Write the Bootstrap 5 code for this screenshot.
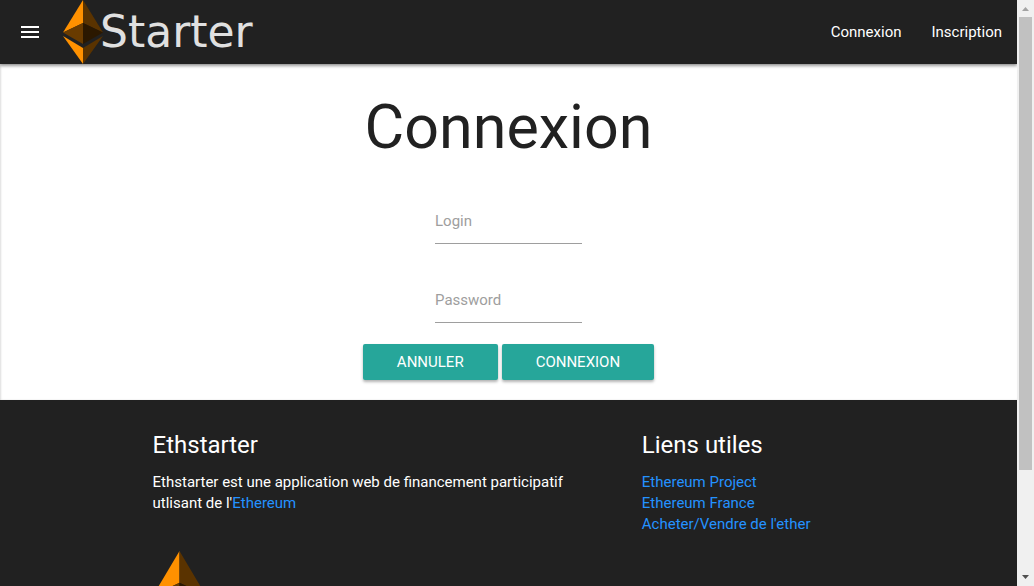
<!DOCTYPE html>
<html lang="fr">
<head>
<meta charset="utf-8">
<meta name="viewport" content="width=device-width, initial-scale=1">
<title>Ethstarter - Connexion</title>
<link href="https://cdn.jsdelivr.net/npm/bootstrap@5.3.0/dist/css/bootstrap.min.css" rel="stylesheet">
<style>
  body { font-family: Roboto, sans-serif; font-size: 15px; line-height: 21px; color: #212121; }
  a { text-decoration: none; color: #2492ff; }
  .page-view { overflow: hidden; }
  .top-bar { height: 64px; background: #212121; box-shadow: 0 2px 3px rgba(0,0,0,.4); padding-left: 20px; z-index: 1; }
  .menu-btn { background: none; width: 20px; }
  .brand { margin-left: 23px; color: #e0e0e0; font: 44px/64px "DejaVu Sans", sans-serif; }
  .brand svg { width: 40px; height: 64px; flex: none; margin-right: -3px; }
  .top-bar .nav-link { color: #fff; padding: 0 15px; line-height: 64px; }
  .form-area { box-shadow: inset 1px 0 2px #ddd; padding: 29px 0 20px; }
  h1 { font-size: 61px; line-height: 69px; font-weight: 400; margin: 0 0 24px; }
  .line-field { width: 147px; margin: 12px 0 21px; }
  .line-field .form-control { border: 0; border-bottom: 1px solid #9e9e9e; border-radius: 0; height: 46px; padding: 0; font-size: 15px; line-height: 21px; background: none; }
  .line-field .form-control::placeholder { color: #9e9e9e; opacity: 1; }
  .btn-teal { background: #26a69a; color: #fff; border: 0; border-radius: 2px; height: 36px; padding: 0 34px; font-size: 15px; line-height: 36px; text-transform: uppercase; box-shadow: 0 2px 3px rgba(0,0,0,.3); }
  .site-footer { background: #212121; color: #fff; padding-top: 30px; }
  .footer-inner { width: 70%; }
  .footer-inner .row { --bs-gutter-x: 22px; }
  h2 { font-size: 24px; line-height: 30px; font-weight: 400; margin: 0 0 12px; }
  .footer-logo { width: 53px; height: 88px; margin-top: 37px; }
  .scroll-track { width: 17px; background: #f0f0f0; flex: none; }
  .scroll-track svg { width: 17px; height: 17px; flex: none; }
  .scroll-thumb { width: 13px; height: 82%; background: #c1c1c1; }
</style>
</head>
<body>
<div class="d-flex vh-100 overflow-hidden">
  <div class="page-view flex-fill d-flex flex-column">
    <nav class="top-bar d-flex align-items-center flex-shrink-0 position-relative">
      <button type="button" class="menu-btn border-0 p-0 d-flex" aria-label="Menu">
        <svg width="20" height="14" viewBox="0 0 20 14"><path d="M1 2h18M1 7h18M1 12h18" stroke="#fff" stroke-width="2"/></svg>
      </button>
      <a href="#" class="brand d-flex align-items-start">
        <svg viewBox="0 0 40 64"><path fill="#ff9100" d="M20 0L0 32.500 20 23z"/><path fill="#5a3300" d="M20 0L40 32.500 20 23z"/><path fill="#693b00" d="M0 32.500L20 23V44z"/><path fill="#2b1800" d="M40 32.500L20 23V44z"/><path fill="#ff9100" d="M0 36L20 48V64z"/><path fill="#5a3300" d="M40 36L20 48V64z"/></svg>
        <span>Starter</span>
      </a>
      <div class="nav ms-auto">
        <a class="nav-link" href="#">Connexion</a>
        <a class="nav-link" href="#">Inscription</a>
      </div>
    </nav>
    <main class="form-area text-center flex-shrink-0">
      <h1>Connexion</h1>
      <form class="d-flex flex-column align-items-center">
        <div class="line-field"><input class="form-control" type="text" placeholder="Login" aria-label="Login"></div>
        <div class="line-field"><input class="form-control" type="password" placeholder="Password" aria-label="Password"></div>
        <div class="d-flex gap-1">
          <button type="button" class="btn btn-teal">Annuler</button>
          <button type="submit" class="btn btn-teal">Connexion</button>
        </div>
      </form>
    </main>
    <footer class="site-footer flex-shrink-0">
      <div class="footer-inner mx-auto">
        <div class="row">
          <div class="col-8 pe-5">
            <h2>Ethstarter</h2>
            <p class="m-0">Ethstarter est une application web de financement participatif utlisant de l'<a href="#">Ethereum</a></p>
            <svg class="footer-logo d-block" viewBox="0 0 40 64" preserveAspectRatio="none"><path fill="#ff9100" d="M20 0L0 32.500 20 23z"/><path fill="#5a3300" d="M20 0L40 32.500 20 23z"/><path fill="#693b00" d="M0 32.500L20 23V44z"/><path fill="#2b1800" d="M40 32.500L20 23V44z"/><path fill="#ff9100" d="M0 36L20 48V64z"/><path fill="#5a3300" d="M40 36L20 48V64z"/></svg>
          </div>
          <div class="col-4">
            <h2>Liens utiles</h2>
            <ul class="list-unstyled m-0">
              <li><a href="#">Ethereum Project</a></li>
              <li><a href="#">Ethereum France</a></li>
              <li><a href="#">Acheter/Vendre de l'ether</a></li>
            </ul>
          </div>
        </div>
      </div>
    </footer>
  </div>
  <div class="scroll-track d-flex flex-column align-items-center" aria-hidden="true">
    <svg viewBox="0 0 17 17"><path fill="#a3a3a3" d="M5 11h7L8.500 7z"/></svg>
    <div class="flex-fill w-100 d-flex justify-content-center"><div class="scroll-thumb"></div></div>
    <svg viewBox="0 0 17 17"><path fill="#505050" d="M5 6h7L8.500 10z"/></svg>
  </div>
</div>
<script src="https://cdn.jsdelivr.net/npm/bootstrap@5.3.0/dist/js/bootstrap.bundle.min.js"></script>
</body>
</html>
